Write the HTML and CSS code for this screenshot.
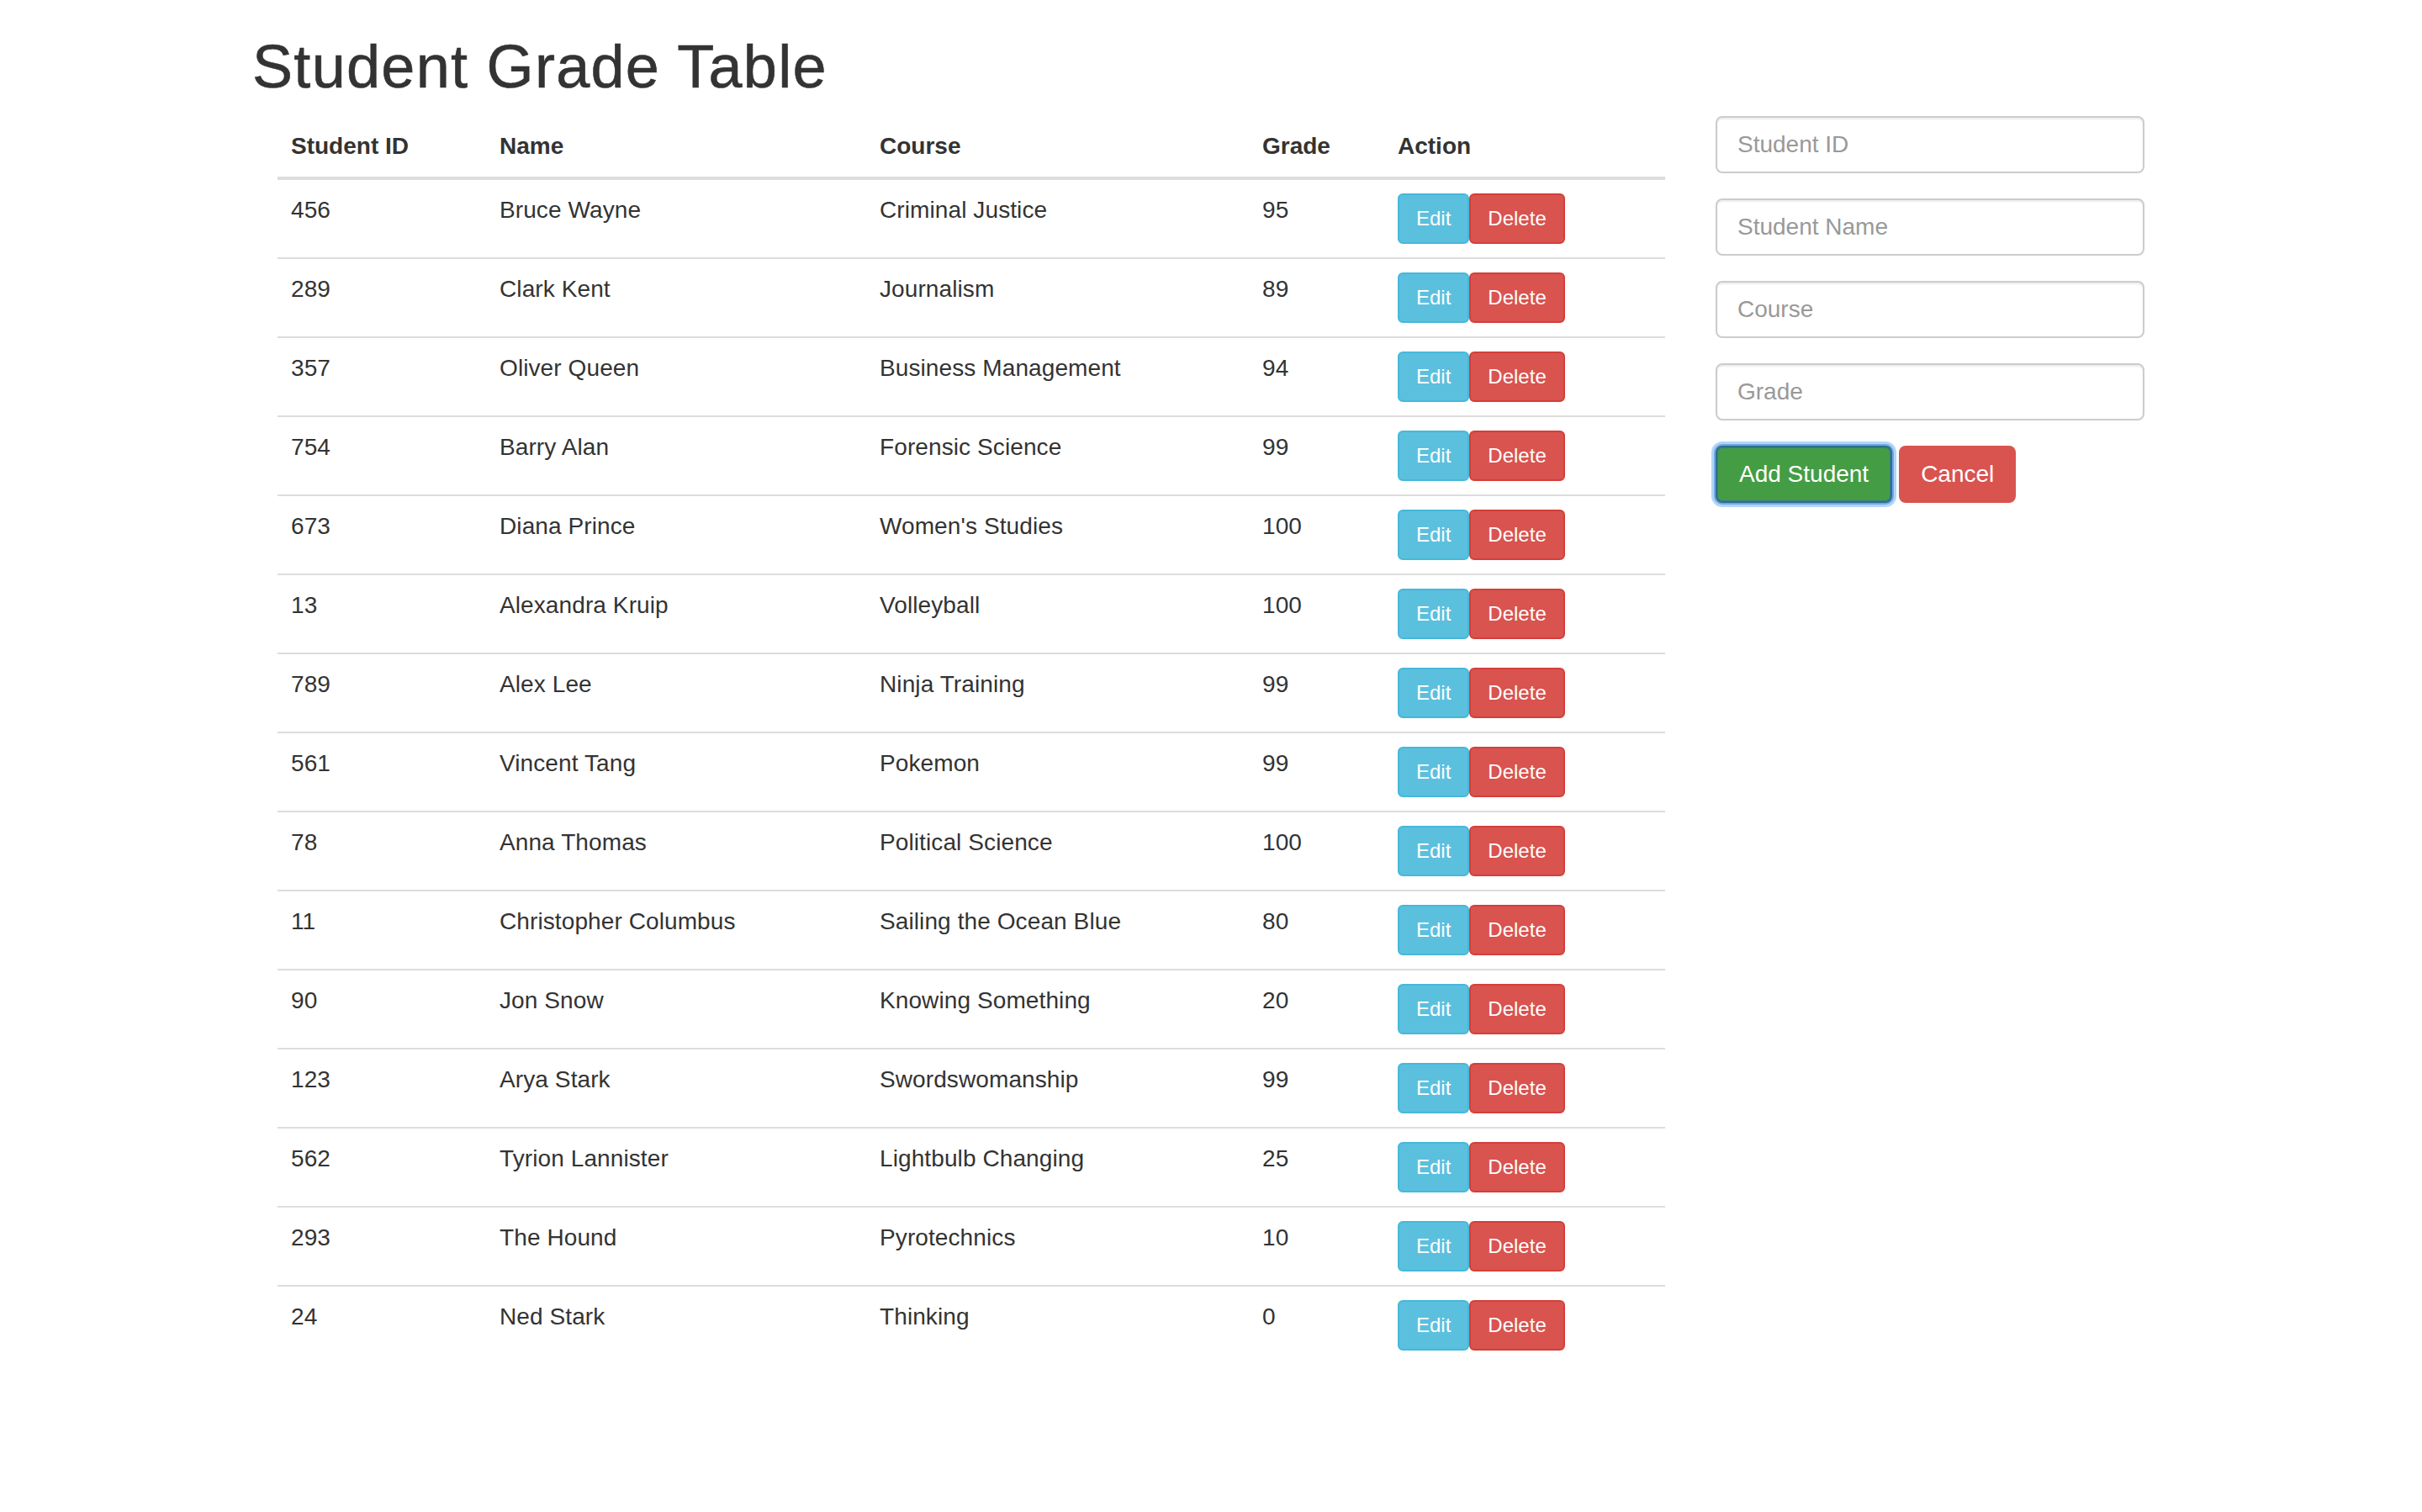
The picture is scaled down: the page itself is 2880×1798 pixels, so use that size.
FILE: index.html
```html
<!DOCTYPE html>
<html lang="en">
<head>
<meta charset="utf-8">
<title>Student Grade Table</title>
<link rel="stylesheet" href="styles.css">
</head>
<body>
<div class="container">
  <h1 class="page-title">Student Grade Table</h1>
  <div class="layout">
    <div class="table-col">
      <table class="grade-table">
        <colgroup>
          <col class="c-id"><col class="c-name"><col class="c-course"><col class="c-grade"><col class="c-action">
        </colgroup>
        <thead>
          <tr><th>Student ID</th><th>Name</th><th>Course</th><th>Grade</th><th>Action</th></tr>
        </thead>
        <tbody>
          <tr><td>456</td><td>Bruce Wayne</td><td>Criminal Justice</td><td>95</td><td><div class="actions"><button class="btn-sm btn-info">Edit</button><button class="btn-sm btn-danger">Delete</button></div></td></tr>
          <tr><td>289</td><td>Clark Kent</td><td>Journalism</td><td>89</td><td><div class="actions"><button class="btn-sm btn-info">Edit</button><button class="btn-sm btn-danger">Delete</button></div></td></tr>
          <tr><td>357</td><td>Oliver Queen</td><td>Business Management</td><td>94</td><td><div class="actions"><button class="btn-sm btn-info">Edit</button><button class="btn-sm btn-danger">Delete</button></div></td></tr>
          <tr><td>754</td><td>Barry Alan</td><td>Forensic Science</td><td>99</td><td><div class="actions"><button class="btn-sm btn-info">Edit</button><button class="btn-sm btn-danger">Delete</button></div></td></tr>
          <tr><td>673</td><td>Diana Prince</td><td>Women's Studies</td><td>100</td><td><div class="actions"><button class="btn-sm btn-info">Edit</button><button class="btn-sm btn-danger">Delete</button></div></td></tr>
          <tr><td>13</td><td>Alexandra Kruip</td><td>Volleyball</td><td>100</td><td><div class="actions"><button class="btn-sm btn-info">Edit</button><button class="btn-sm btn-danger">Delete</button></div></td></tr>
          <tr><td>789</td><td>Alex Lee</td><td>Ninja Training</td><td>99</td><td><div class="actions"><button class="btn-sm btn-info">Edit</button><button class="btn-sm btn-danger">Delete</button></div></td></tr>
          <tr><td>561</td><td>Vincent Tang</td><td>Pokemon</td><td>99</td><td><div class="actions"><button class="btn-sm btn-info">Edit</button><button class="btn-sm btn-danger">Delete</button></div></td></tr>
          <tr><td>78</td><td>Anna Thomas</td><td>Political Science</td><td>100</td><td><div class="actions"><button class="btn-sm btn-info">Edit</button><button class="btn-sm btn-danger">Delete</button></div></td></tr>
          <tr><td>11</td><td>Christopher Columbus</td><td>Sailing the Ocean Blue</td><td>80</td><td><div class="actions"><button class="btn-sm btn-info">Edit</button><button class="btn-sm btn-danger">Delete</button></div></td></tr>
          <tr><td>90</td><td>Jon Snow</td><td>Knowing Something</td><td>20</td><td><div class="actions"><button class="btn-sm btn-info">Edit</button><button class="btn-sm btn-danger">Delete</button></div></td></tr>
          <tr><td>123</td><td>Arya Stark</td><td>Swordswomanship</td><td>99</td><td><div class="actions"><button class="btn-sm btn-info">Edit</button><button class="btn-sm btn-danger">Delete</button></div></td></tr>
          <tr><td>562</td><td>Tyrion Lannister</td><td>Lightbulb Changing</td><td>25</td><td><div class="actions"><button class="btn-sm btn-info">Edit</button><button class="btn-sm btn-danger">Delete</button></div></td></tr>
          <tr><td>293</td><td>The Hound</td><td>Pyrotechnics</td><td>10</td><td><div class="actions"><button class="btn-sm btn-info">Edit</button><button class="btn-sm btn-danger">Delete</button></div></td></tr>
          <tr><td>24</td><td>Ned Stark</td><td>Thinking</td><td>0</td><td><div class="actions"><button class="btn-sm btn-info">Edit</button><button class="btn-sm btn-danger">Delete</button></div></td></tr>
        </tbody>
      </table>
    </div>
    <form class="form-col">
      <div class="form-group"><input class="form-control" type="text" placeholder="Student ID"></div>
      <div class="form-group"><input class="form-control" type="text" placeholder="Student Name"></div>
      <div class="form-group"><input class="form-control" type="text" placeholder="Course"></div>
      <div class="form-group"><input class="form-control" type="text" placeholder="Grade"></div>
      <div class="form-buttons">
        <button type="button" class="btn btn-success btn-focused">Add Student</button>
        <button type="button" class="btn btn-danger">Cancel</button>
      </div>
    </form>
  </div>
</div>
</body>
</html>
```

FILE: styles.css
```css
* { box-sizing: border-box; }

html, body {
  margin: 0;
  padding: 0;
  background: #fff;
}

body {
  font-family: "Liberation Sans", Arial, Helvetica, sans-serif;
  font-size: 28px;
  line-height: 40px;
  color: #333;
}

.container {
  width: 2340px;
  margin: 0 auto;
  padding: 0 30px;
}

.page-title {
  font-size: 72px;
  font-weight: 500;
  line-height: 1.1;
  letter-spacing: 1.3px;
  margin: 40px 0 19px;
  color: #333;
  -webkit-text-stroke: 0.6px #333;
}

.layout {
  display: flex;
  align-items: flex-start;
}

.table-col {
  margin-left: 30px;
  width: 1650px;
}

.grade-table {
  width: 1650px;
  border-collapse: collapse;
  border-spacing: 0;
  table-layout: fixed;
}

.c-id { width: 248px; }
.c-name { width: 452px; }
.c-course { width: 455px; }
.c-grade { width: 161px; }
.c-action { width: 334px; }

.grade-table th {
  text-align: left;
  font-weight: 700;
  padding: 16px;
  line-height: 40px;
  vertical-align: bottom;
  border-bottom: 4px solid #ddd;
}

.grade-table td {
  padding: 16px;
  line-height: 40px;
  vertical-align: top;
  border-top: 2px solid #ddd;
  white-space: nowrap;
  letter-spacing: 0.1px;
}

.grade-table tbody tr:first-child td {
  border-top: 0;
}

.actions {
  display: flex;
}

.btn-sm {
  font-family: inherit;
  font-size: 24px;
  line-height: 36px;
  padding: 10px 20px;
  border: 2px solid transparent;
  border-radius: 6px;
  color: #fff;
  margin: 0;
  cursor: pointer;
}

.btn-info {
  background: #5bc0de;
  border-color: #46b8da;
}

.btn-danger {
  background: #d9534f;
  border-color: #d43f3a;
  color: #fff;
}

.form-col {
  margin: 0 0 0 60px;
  width: 510px;
}

.form-group {
  margin-bottom: 30px;
}

.form-control {
  display: block;
  width: 100%;
  height: 68px;
  padding: 12px 24px;
  font-family: inherit;
  font-size: 28px;
  line-height: 40px;
  color: #555;
  background: #fff;
  border: 2px solid #ccc;
  border-radius: 8px;
  box-shadow: inset 0 2px 2px rgba(0, 0, 0, 0.075);
  margin: 0;
}

.form-control::placeholder {
  color: #999;
  opacity: 1;
}

.form-buttons {
  display: flex;
  gap: 8px;
}

.btn {
  font-family: inherit;
  font-size: 28px;
  line-height: 40px;
  padding: 12px 24px;
  border: 2px solid transparent;
  border-radius: 8px;
  color: #fff;
  margin: 0;
  cursor: pointer;
}

.btn-success {
  background: #5cb85c;
  border-color: #4cae4c;
  padding: 12px 26px;
}

.btn-focused {
  background: #449d44;
  border-color: #2f6f8c;
  box-shadow: inset 0 0 0 1px #3b7898, 0 0 0 2px #6fa9e0, 0 0 0 5px #b3d5f7;
}
```
